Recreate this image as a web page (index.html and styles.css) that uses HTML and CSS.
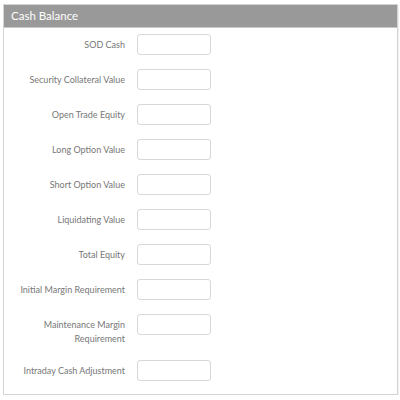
FILE: index.html
```html
<!DOCTYPE html>
<html lang="en">
<head>
  <meta charset="UTF-8">
  <title>Cash Balance</title>
  <link rel="stylesheet" href="styles.css">
</head>
<body>
  <div class="panel">
    <div class="panel-header">Cash Balance</div>
    <form class="balance-form">
      <label for="sodCash">SOD Cash</label>
      <input type="text" id="sodCash">
      <label for="collateral">Security Collateral Value</label>
      <input type="text" id="collateral">
      <label for="openTrade">Open Trade Equity</label>
      <input type="text" id="openTrade">
      <label for="longOption">Long Option Value</label>
      <input type="text" id="longOption">
      <label for="shortOption">Short Option Value</label>
      <input type="text" id="shortOption">
      <label for="liquidating">Liquidating Value</label>
      <input type="text" id="liquidating">
      <label for="totalEquity">Total Equity</label>
      <input type="text" id="totalEquity">
      <label for="initialMargin">Initial Margin Requirement</label>
      <input type="text" id="initialMargin">
      <label for="maintMargin">Maintenance Margin Requirement</label>
      <input type="text" id="maintMargin">
      <label for="intraday">Intraday Cash Adjustment</label>
      <input type="text" id="intraday">
    </form>
  </div>
</body>
</html>
```
FILE: styles.css
```css
body {
  margin: 0;
  background-color: #fff;
  font-family: Lato, 'Open Sans', sans-serif;
}
.panel {
  margin: 4px 2px 0 3px;
  height: 389px;
  border: 1px solid #d4d4d4;
  box-shadow: 1px 1px 1px rgba(0, 0, 0, 0.06);
  background-color: #fff;
}
.panel-header {
  height: 22px;
  line-height: 21px;
  padding-left: 7px;
  background-color: #999;
  border-bottom: 1px solid #c8c8c8;
  color: #fff;
  font-size: 11.5px;
}
.balance-form {
  display: grid;
  grid-template-columns: 106px 74px;
  column-gap: 12px;
  row-gap: 14px;
  align-items: start;
  padding: 6px 0 0 15px;
}
label {
  padding-top: 4px;
  line-height: 14px;
  text-align: right;
  font-size: 9px;
  color: #777;
}
input {
  width: 74px;
  height: 21px;
  margin: 0;
  border: 1px solid #d8d8d8;
  border-radius: 3px;
  box-sizing: border-box;
  background-color: #fff;
}
```
